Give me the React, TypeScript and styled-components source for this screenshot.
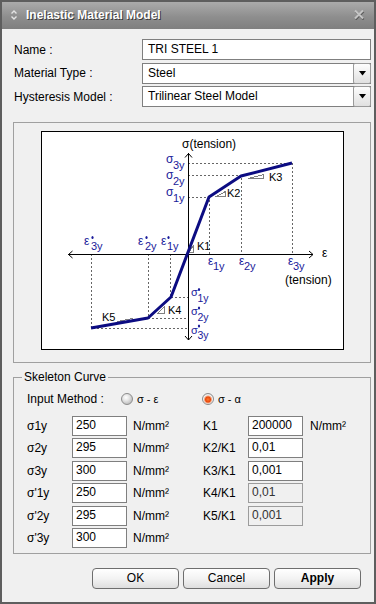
import React from "react";
import styled, { createGlobalStyle } from "styled-components";

const Global = createGlobalStyle`
  html, body { margin: 0; padding: 0; background: #f0f0f0; }
  body { font-family: "Liberation Sans", Arial, sans-serif; font-size: 12px; color: #000; }
  * { box-sizing: border-box; }
`;

const Window = styled.div`
  width: 376px;
  height: 604px;
  border: 2px solid #5e5e5e;
  background: #f0f0f0;
  display: flex;
  flex-direction: column;
  overflow: hidden;
`;

const TitleBar = styled.div`
  height: 27px;
  flex: none;
  display: flex;
  align-items: center;
  padding: 0 9px 2px 8px;
  background: linear-gradient(#ababab, #8e8e8e 55%, #7f7f7f);
`;

const TitleText = styled.div`
  margin-left: 8px;
  color: #fff;
  font-weight: bold;
  font-size: 12px;
  text-shadow: 1px 1px 0 #3a3a3a;
`;

const CloseBtn = styled.div`
  margin-left: auto;
  width: 12px;
  height: 11px;
  display: flex;
`;

const Body = styled.div`
  flex: 1;
  display: flex;
  flex-direction: column;
  padding: 10px 3px 0 11px;
`;

const FormRow = styled.div`
  display: grid;
  grid-template-columns: 129px 1fr;
  align-items: center;
  height: 21px;
  & + & { margin-top: 2.5px; }
`;

const FieldLabel = styled.span`
  padding-left: 1px;
`;

const TextField = styled.div`
  height: 21px;
  border: 1px solid #7f7f7f;
  background: #fff;
  padding-left: 5px;
  line-height: 19px;
`;

const SelectBox = styled.div`
  height: 21px;
  border: 1px solid #7f7f7f;
  background: #fff;
  display: flex;
  align-items: stretch;
`;

const SelectValue = styled.span`
  flex: 1;
  padding-left: 5px;
  line-height: 19px;
`;

const ArrowButton = styled.span`
  width: 18px;
  margin: -1px -1px -1px 0;
  border: 1px solid #9a9a9a;
  border-radius: 2px;
  background: linear-gradient(#fdfdfd, #e0e0e0);
  display: flex;
  align-items: center;
  justify-content: center;
`;

const ChartGroup = styled.div`
  margin-top: 15px;
  height: 241px;
  border: 1px solid #a0a0a0;
  padding: 8px 0 0 27px;
  display: flex;
  align-items: flex-start;
`;

const ChartFrame = styled.div`
  width: 303px;
  height: 219px;
  border: 1px solid #000;
  background: #fff;
  svg { display: block; }
`;

const GroupBox = styled.div`
  position: relative;
  margin-top: 14px;
  border: 1px solid #a0a0a0;
  padding: 13px 0 5px 13px;
`;

const Legend = styled.span`
  position: absolute;
  top: -8px;
  left: 8px;
  padding: 0 2px;
  line-height: 14px;
  background: #f0f0f0;
`;

const MethodRow = styled.div`
  display: flex;
  align-items: center;
  height: 16px;
`;

const MethodLabel = styled.span`
  width: 94px;
`;

const RadioOption = styled.label`
  display: flex;
  align-items: center;
  gap: 4px;
  width: 81px;
  font-size: 11px;
`;

const RadioDot = styled.span<{ $checked?: boolean }>`
  width: 12px;
  height: 12px;
  border-radius: 50%;
  border: 1px solid #8c8c8c;
  background: ${(p) =>
    p.$checked
      ? "radial-gradient(circle at 50% 55%, #ff7a2e 0, #e8480c 2.5px, #f2a27c 3.5px, #f4f4f4 4.5px, #c4c4c4 100%)"
      : "radial-gradient(circle at 40% 35%, #ffffff 0, #e6e6e6 35%, #a8a8a8 100%)"};
`;

const ParamGrid = styled.div`
  margin-top: 9px;
  display: grid;
  grid-template-columns: 45px 55px 76px 45px 55px auto;
  grid-auto-rows: 20px;
  row-gap: 2.4px;
  align-items: center;
`;

const ParamLabel = styled.span``;

const ParamInput = styled.div<{ $disabled?: boolean }>`
  height: 20px;
  border: 1px solid ${(p) => (p.$disabled ? "#9c9c9c" : "#7f7f7f")};
  background: ${(p) => (p.$disabled ? "#f0f0f0" : "#fff")};
  color: ${(p) => (p.$disabled ? "#333" : "#000")};
  padding: 1px 0 0 3px;
  line-height: 14px;
`;

const Unit = styled.span<{ $pad?: number }>`
  padding-left: ${(p) => p.$pad ?? 6}px;
`;

const ButtonRow = styled.div`
  margin-top: 14px;
  padding-right: 10px;
  display: flex;
  justify-content: flex-end;
  gap: 4px;
`;

const Button = styled.button<{ $primary?: boolean }>`
  width: 87px;
  height: 21px;
  border: 1px solid #6e6e6e;
  border-radius: 4px;
  background: linear-gradient(#ffffff, #f3f3f3 50%, #dedede);
  font-family: "Liberation Sans", Arial, sans-serif;
  font-size: 12px;
  font-weight: ${(p) => (p.$primary ? "bold" : "normal")};
  color: #000;
  padding: 0;
`;

const BLUE = "#1a1a9a";
const CURVE = "#0c0c82";
const DASH = "#666";

type GLProps = {
  x: number;
  y: number;
  g: string;
  sub: string;
  prime?: boolean;
  sx?: number;
  sy?: number;
  gs?: number;
  ss?: number;
};
const GL = ({ x, y, g, sub, prime, sx = 7, sy = 6, gs = 12, ss = 11 }: GLProps) => (
  <g fill={BLUE}>
    <text x={x} y={y} fontSize={gs} fontFamily='"Liberation Sans", Arial, sans-serif'>
      {g}
      <tspan x={x + sx} y={y + sy} fontSize={ss}>
        {sub}
      </tspan>
    </text>
    {prime && <ellipse cx={x + sx + 1.5} cy={y + sy - 12.5} rx={1.1} ry={1.6} />}
  </g>
);

const Chart = () => (
  <svg width={301} height={217} viewBox="42 132 301 217">
    <g stroke={DASH} strokeWidth={1} strokeDasharray="2 2" fill="none" shapeRendering="crispEdges">
      <path d="M188 163.5H292.5V254" />
      <path d="M188 175.5H241.5V254" />
      <path d="M188 197.5H209.5V254" />
      <path d="M91.5 254V328.5H188" />
      <path d="M148.5 254V318.5H188" />
      <path d="M170.5 254V297.5H188" />
    </g>
    <g stroke="#000" strokeWidth={1} fill="none">
      <path d="M188.5 153V340" shapeRendering="crispEdges" />
      <path d="M185 157.5L188.5 153.5L192 157.5" />
      <path d="M185 336L188.5 340L192 336" />
      <path d="M68 254.5H313" shapeRendering="crispEdges" />
      <path d="M72.5 251L68.5 254.5L72.5 258" />
      <path d="M309 251L313 254.5L309 258" />
    </g>
    <g stroke="#808080" strokeWidth={1} fill="none" shapeRendering="crispEdges">
      <path d="M188.5 252.5H193.5V245.5Z" />
      <path d="M216.5 196.5H225.5V191.5Z" />
      <path d="M248.5 178.5H263.5V174.5Z" />
      <path d="M157.5 313.5H164.5V306.5Z" />
      <path d="M117.5 321.5H132.5V318.5Z" />
    </g>
    <polyline
      points="91,328 148,318 171,297 209,197 241,176 292,163"
      fill="none"
      stroke={CURVE}
      strokeWidth={3}
      strokeLinejoin="round"
    />
    <g fill="#000" fontFamily='"Liberation Sans", Arial, sans-serif' fontSize={12}>
      <text x={182} y={148}>σ(tension)</text>
      <text x={322} y={257}>ε</text>
      <text x={285} y={283.5}>(tension)</text>
    </g>
    <g fill="#000" fontFamily='"Liberation Sans", Arial, sans-serif' fontSize={11}>
      <text x={197} y={250}>K1</text>
      <text x={227} y={197}>K2</text>
      <text x={269} y={181}>K3</text>
      <text x={168} y={314}>K4</text>
      <text x={102} y={321}>K5</text>
    </g>
    <GL x={166} y={163} g="σ" sub="3y" sy={6} />
    <GL x={166} y={179} g="σ" sub="2y" />
    <GL x={166} y={196} g="σ" sub="1y" />
    <GL x={84} y={245} g="ε" sub="3y" prime sy={5} />
    <GL x={138} y={245} g="ε" sub="2y" prime sy={5} />
    <GL x={161} y={245} g="ε" sub="1y" prime sx={6} sy={5} />
    <GL x={208} y={265} g="ε" sub="1y" sx={5} sy={4.5} />
    <GL x={239} y={265} g="ε" sub="2y" sx={5} sy={4.5} />
    <GL x={288} y={265} g="ε" sub="3y" sx={5} sy={4.5} />
    <GL x={191} y={296} g="σ" sub="1y" prime sx={6.5} sy={6} gs={11} ss={10.5} />
    <GL x={191} y={315} g="σ" sub="2y" prime sx={6.5} sy={5.5} gs={11} ss={10.5} />
    <GL x={191} y={333.5} g="σ" sub="3y" prime sx={6.5} sy={5} gs={11} ss={10.5} />
  </svg>
);

const TitleIcon = () => (
  <svg width={8} height={12} viewBox="0 0 8 12">
    <path d="M1.5 4.5L4 2L6.5 4.5" fill="none" stroke="#e4e4e4" strokeWidth={1.4} />
    <path d="M1.5 7.5L4 10L6.5 7.5" fill="none" stroke="#e4e4e4" strokeWidth={1.4} />
  </svg>
);

const CloseIcon = () => (
  <svg width={12} height={11} viewBox="0 0 12 11">
    <path d="M2 2L10 10M10 2L2 10" stroke="#5a5a5a" strokeWidth={2} transform="translate(0.6 0.6)" />
    <path d="M2 1.5L10 9.5M10 1.5L2 9.5" stroke="#c4c4c4" strokeWidth={2} />
  </svg>
);

const DownTriangle = () => (
  <svg width={7} height={5} viewBox="0 0 7 5">
    <path d="M0 0H7L3.5 4.5Z" fill="#000" />
  </svg>
);

type Param = { label: string; value: string; k?: string; kv?: string; kDisabled?: boolean; kUnit?: boolean };
const params: Param[] = [
  { label: "σ1y", value: "250", k: "K1", kv: "200000", kUnit: true },
  { label: "σ2y", value: "295", k: "K2/K1", kv: "0,01" },
  { label: "σ3y", value: "300", k: "K3/K1", kv: "0,001" },
  { label: "σ'1y", value: "250", k: "K4/K1", kv: "0,01", kDisabled: true },
  { label: "σ'2y", value: "295", k: "K5/K1", kv: "0,001", kDisabled: true },
  { label: "σ'3y", value: "300" },
];

export default function App() {
  return (
    <>
      <Global />
      <Window>
        <TitleBar>
          <TitleIcon />
          <TitleText>Inelastic Material Model</TitleText>
          <CloseBtn>
            <CloseIcon />
          </CloseBtn>
        </TitleBar>
        <Body>
          <FormRow>
            <FieldLabel>Name :</FieldLabel>
            <TextField>TRI STEEL 1</TextField>
          </FormRow>
          <FormRow>
            <FieldLabel>Material Type :</FieldLabel>
            <SelectBox>
              <SelectValue>Steel</SelectValue>
              <ArrowButton>
                <DownTriangle />
              </ArrowButton>
            </SelectBox>
          </FormRow>
          <FormRow>
            <FieldLabel>Hysteresis Model :</FieldLabel>
            <SelectBox>
              <SelectValue>Trilinear Steel Model</SelectValue>
              <ArrowButton>
                <DownTriangle />
              </ArrowButton>
            </SelectBox>
          </FormRow>

          <ChartGroup>
            <ChartFrame>
              <Chart />
            </ChartFrame>
          </ChartGroup>

          <GroupBox>
            <Legend>Skeleton Curve</Legend>
            <MethodRow>
              <MethodLabel>Input Method :</MethodLabel>
              <RadioOption>
                <RadioDot />
                <span>σ - ε</span>
              </RadioOption>
              <RadioOption>
                <RadioDot $checked />
                <span>σ - α</span>
              </RadioOption>
            </MethodRow>
            <ParamGrid>
              {params.map((p) => (
                <React.Fragment key={p.label}>
                  <ParamLabel>{p.label}</ParamLabel>
                  <ParamInput>{p.value}</ParamInput>
                  <Unit>N/mm²</Unit>
                  {p.k ? (
                    <>
                      <ParamLabel>{p.k}</ParamLabel>
                      <ParamInput $disabled={p.kDisabled}>{p.kv}</ParamInput>
                      {p.kUnit ? <Unit $pad={7}>N/mm²</Unit> : <span />}
                    </>
                  ) : (
                    <>
                      <span />
                      <span />
                      <span />
                    </>
                  )}
                </React.Fragment>
              ))}
            </ParamGrid>
          </GroupBox>

          <ButtonRow>
            <Button>OK</Button>
            <Button>Cancel</Button>
            <Button $primary>Apply</Button>
          </ButtonRow>
        </Body>
      </Window>
    </>
  );
}
